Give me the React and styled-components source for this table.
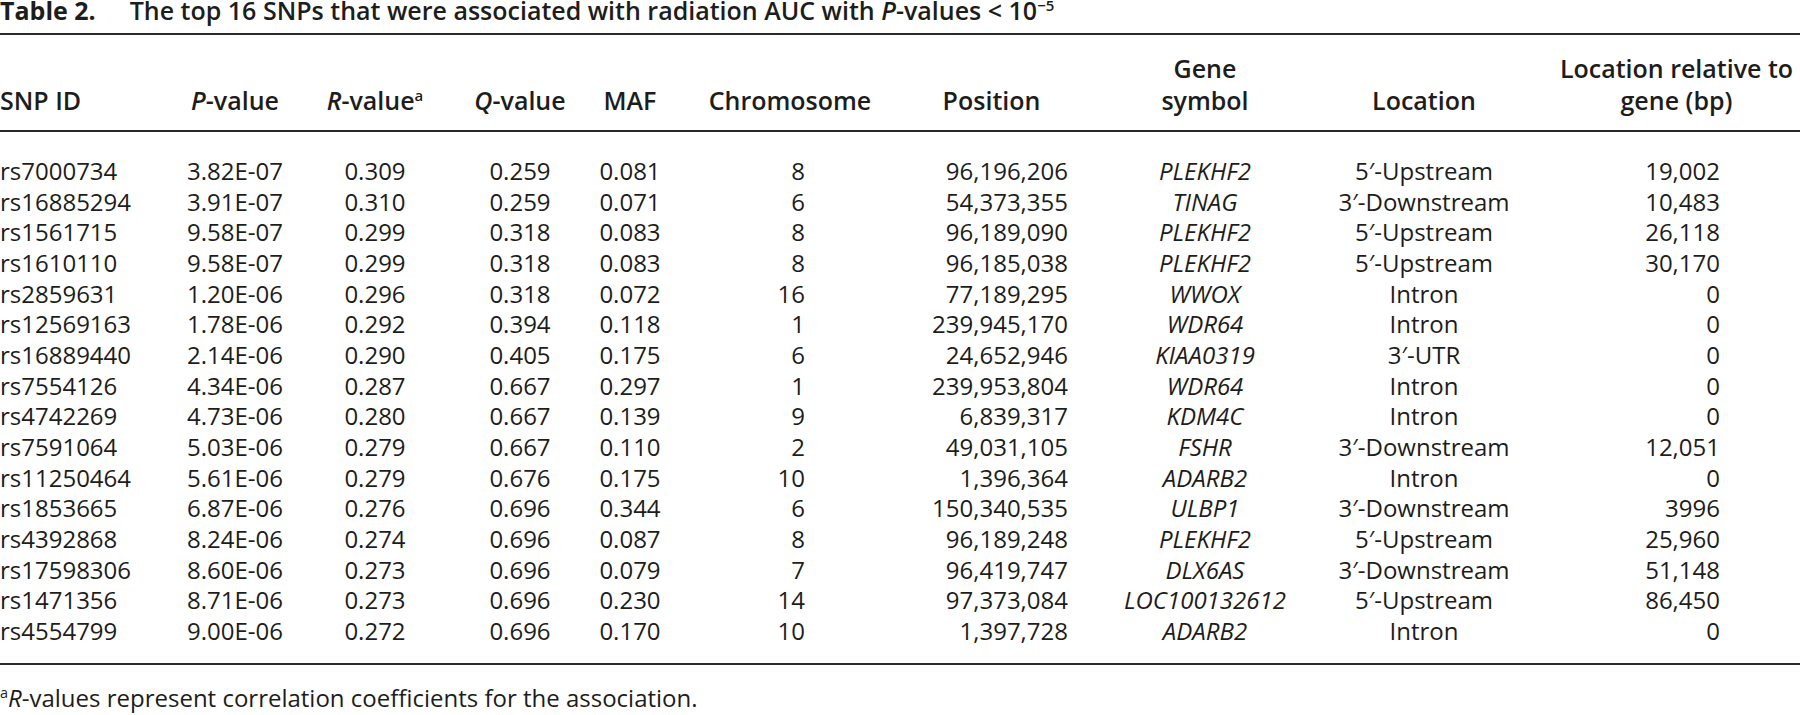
import React from "react";
import styled, { createGlobalStyle } from "styled-components";

const GlobalStyle = createGlobalStyle`
  html, body {
    margin: 0;
    padding: 0;
    background: #ffffff;
  }
  body {
    font-family: "Open Sans", "Noto Sans", sans-serif;
    color: #1d1d1b;
  }
`;

const RULE = "#2a2a2a";

const Page = styled.div`
  width: 1800px;
  overflow: hidden;
`;

const Caption = styled.div`
  display: flex;
  align-items: baseline;
  gap: 34px;
  font-size: 25px;
  line-height: 20px;
  padding-bottom: 13px;
  border-bottom: 2px solid ${RULE};
  white-space: nowrap;
`;

const Label = styled.span`
  font-weight: 700;
`;

const CaptionText = styled.span`
  font-weight: 600;
`;

const Sup = styled.sup`
  font-size: 0.6em;
  line-height: 0;
  vertical-align: 0.6em;
`;

const Table = styled.table`
  width: 1800px;
  table-layout: fixed;
  border-collapse: collapse;
  border-bottom: 2px solid ${RULE};
`;

const HeadCell = styled.th`
  font-size: 25px;
  font-weight: 600;
  line-height: 32px;
  text-align: ${(p) => (p.$align === "left" ? "left" : "center")};
  vertical-align: bottom;
  padding: 17px ${(p) => p.$pr || 0}px 14px 0;
  border-bottom: 2px solid ${RULE};
  white-space: nowrap;
`;

const Cell = styled.td`
  font-size: 24px;
  line-height: 30.67px;
  padding: 0 ${(p) => p.$pr || 0}px 0 0;
  text-align: ${(p) => p.$align};
  font-style: ${(p) => (p.$italic ? "italic" : "normal")};
  white-space: nowrap;

  tr:first-child > & {
    padding-top: 24px;
  }
  tr:last-child > & {
    padding-bottom: 16px;
  }
`;

const Footnote = styled.p`
  margin: 18px 0 0;
  font-size: 24px;
  line-height: 30px;
  white-space: nowrap;
`;

// column widths / alignment, measured off the reference
const columns = [
  { w: 165, align: "left", head: "SNP ID" },
  { w: 140, align: "center", head: <><i>P</i>-value</> },
  { w: 140, align: "center", head: <><i>R</i>-value<Sup>a</Sup></> },
  { w: 150, align: "center", head: <><i>Q</i>-value</> },
  { w: 70, align: "center", head: "MAF" },
  { w: 250, align: "right", pr: 110, head: "Chromosome" },
  { w: 175, align: "right", pr: 22, hpr: 22, head: "Position" },
  { w: 230, align: "center", italic: true, head: <>Gene<br />symbol</> },
  { w: 233, align: "center", pr: 25, hpr: 25, head: "Location" },
  { w: 247, align: "right", pr: 80, head: <>Location relative to<br />gene (bp)</> },
];

const rows = [
  ["rs7000734", "3.82E-07", "0.309", "0.259", "0.081", "8", "96,196,206", "PLEKHF2", "5′-Upstream", "19,002"],
  ["rs16885294", "3.91E-07", "0.310", "0.259", "0.071", "6", "54,373,355", "TINAG", "3′-Downstream", "10,483"],
  ["rs1561715", "9.58E-07", "0.299", "0.318", "0.083", "8", "96,189,090", "PLEKHF2", "5′-Upstream", "26,118"],
  ["rs1610110", "9.58E-07", "0.299", "0.318", "0.083", "8", "96,185,038", "PLEKHF2", "5′-Upstream", "30,170"],
  ["rs2859631", "1.20E-06", "0.296", "0.318", "0.072", "16", "77,189,295", "WWOX", "Intron", "0"],
  ["rs12569163", "1.78E-06", "0.292", "0.394", "0.118", "1", "239,945,170", "WDR64", "Intron", "0"],
  ["rs16889440", "2.14E-06", "0.290", "0.405", "0.175", "6", "24,652,946", "KIAA0319", "3′-UTR", "0"],
  ["rs7554126", "4.34E-06", "0.287", "0.667", "0.297", "1", "239,953,804", "WDR64", "Intron", "0"],
  ["rs4742269", "4.73E-06", "0.280", "0.667", "0.139", "9", "6,839,317", "KDM4C", "Intron", "0"],
  ["rs7591064", "5.03E-06", "0.279", "0.667", "0.110", "2", "49,031,105", "FSHR", "3′-Downstream", "12,051"],
  ["rs11250464", "5.61E-06", "0.279", "0.676", "0.175", "10", "1,396,364", "ADARB2", "Intron", "0"],
  ["rs1853665", "6.87E-06", "0.276", "0.696", "0.344", "6", "150,340,535", "ULBP1", "3′-Downstream", "3996"],
  ["rs4392868", "8.24E-06", "0.274", "0.696", "0.087", "8", "96,189,248", "PLEKHF2", "5′-Upstream", "25,960"],
  ["rs17598306", "8.60E-06", "0.273", "0.696", "0.079", "7", "96,419,747", "DLX6AS", "3′-Downstream", "51,148"],
  ["rs1471356", "8.71E-06", "0.273", "0.696", "0.230", "14", "97,373,084", "LOC100132612", "5′-Upstream", "86,450"],
  ["rs4554799", "9.00E-06", "0.272", "0.696", "0.170", "10", "1,397,728", "ADARB2", "Intron", "0"],
];

const App = () => {
  return (
    <Page>
      <GlobalStyle />
      <Caption>
        <Label>Table 2.</Label>
        <CaptionText>
          The top 16 SNPs that were associated with radiation AUC with <i>P</i>-values &lt; 10<Sup>−5</Sup>
        </CaptionText>
      </Caption>
      <Table>
        <colgroup>
          {columns.map((c, i) => (
            <col key={i} style={{ width: c.w }} />
          ))}
        </colgroup>
        <thead>
          <tr>
            {columns.map((c, i) => (
              <HeadCell key={i} $align={c.align} $pr={c.hpr}>
                {c.head}
              </HeadCell>
            ))}
          </tr>
        </thead>
        <tbody>
          {rows.map((r) => (
            <tr key={r[0]}>
              {r.map((v, i) => (
                <Cell key={i} $align={columns[i].align} $pr={columns[i].pr} $italic={columns[i].italic}>
                  {v}
                </Cell>
              ))}
            </tr>
          ))}
        </tbody>
      </Table>
      <Footnote>
        <Sup>a</Sup>
        <i>R</i>-values represent correlation coefficients for the association.
      </Footnote>
    </Page>
  );
};

export default App;
